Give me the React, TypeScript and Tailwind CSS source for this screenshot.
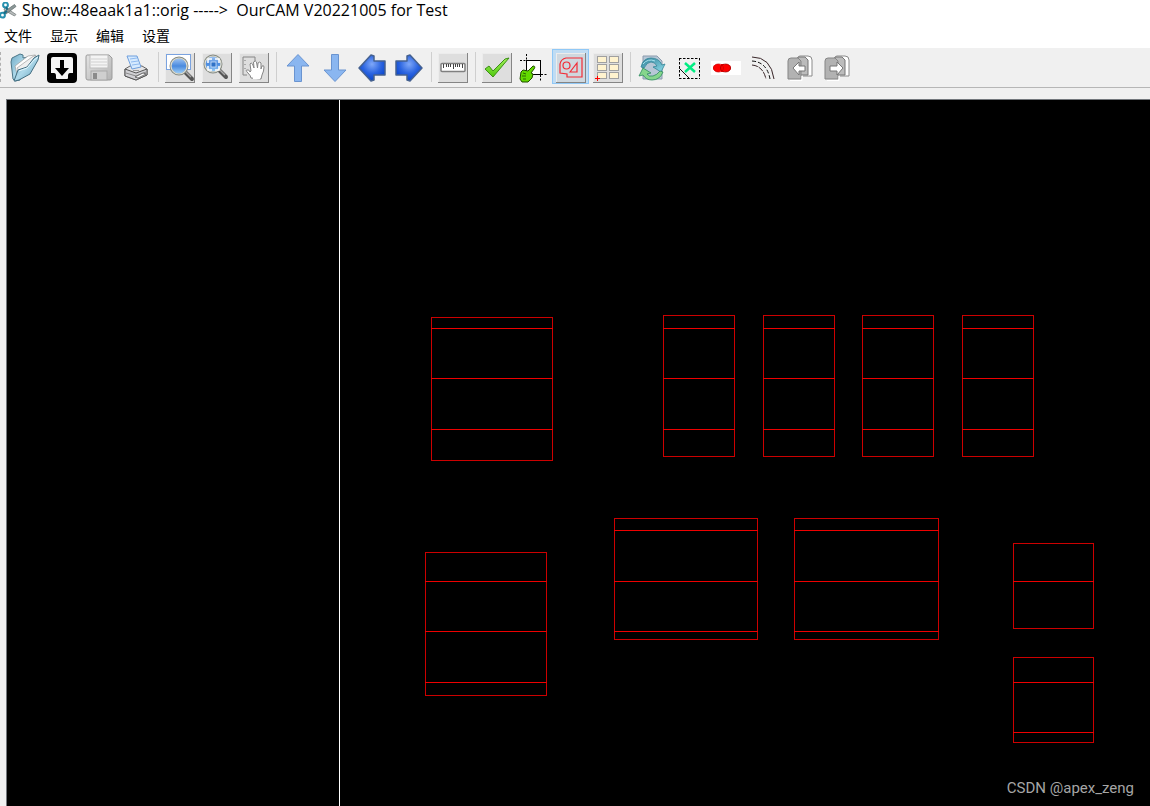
import type { ReactNode } from 'react';
import { clsx } from 'clsx';

interface Tool {
  name: string;
  icon: ReactNode;
  raised?: boolean;
  active?: boolean;
}

interface Shape {
  x: number;
  y: number;
  w: number;
  h: number;
  lines: number[];
}

const menus = ['文件', '显示', '编辑', '设置'];

const shapes: Shape[] = [
  { x: 431, y: 317, w: 121, h: 143, lines: [328, 378, 429] },
  { x: 663, y: 315, w: 71, h: 141, lines: [328, 378, 429] },
  { x: 763, y: 315, w: 71, h: 141, lines: [328, 378, 429] },
  { x: 862, y: 315, w: 71, h: 141, lines: [328, 378, 429] },
  { x: 962, y: 315, w: 71, h: 141, lines: [328, 378, 429] },
  { x: 425, y: 552, w: 121, h: 143, lines: [581, 631, 682] },
  { x: 614, y: 518, w: 143, h: 121, lines: [530, 581, 631] },
  { x: 794, y: 518, w: 144, h: 121, lines: [530, 581, 631] },
  { x: 1013, y: 543, w: 80, h: 85, lines: [581] },
  { x: 1013, y: 657, w: 80, h: 85, lines: [682, 732] },
];

const Svg = ({ children }: { children: ReactNode }) => (
  <svg viewBox="0 0 30 30" className="block h-[30px] w-[30px]" fill="none" aria-hidden="true">
    {children}
  </svg>
);

const Gradients = () => (
  <svg className="absolute h-0 w-0" aria-hidden="true">
    <defs>
      <linearGradient id="folder" x1="0" y1="0" x2="1" y2="1">
        <stop offset="0" stopColor="#6fa9c4" />
        <stop offset="0.5" stopColor="#aed9ea" />
        <stop offset="1" stopColor="#5f9dba" />
      </linearGradient>
      <linearGradient id="lens" x1="0" y1="0" x2="0" y2="1">
        <stop offset="0" stopColor="#a9cbf5" />
        <stop offset="0.5" stopColor="#4a8ade" />
        <stop offset="1" stopColor="#a8d8fb" />
      </linearGradient>
      <radialGradient id="arrow" cx="0.5" cy="0.35" r="0.6">
        <stop offset="0" stopColor="#7fa8f8" />
        <stop offset="0.6" stopColor="#2b64e0" />
        <stop offset="1" stopColor="#0b48cf" />
      </radialGradient>
      <linearGradient id="tick" x1="0" y1="0" x2="0" y2="1">
        <stop offset="0" stopColor="#a2f05a" />
        <stop offset="1" stopColor="#4fc80e" />
      </linearGradient>
      <linearGradient id="swirl" x1="0" y1="0" x2="1" y2="1">
        <stop offset="0" stopColor="#2f8099" />
        <stop offset="1" stopColor="#8fdcea" />
      </linearGradient>
      <linearGradient id="disk" x1="0" y1="0" x2="1" y2="1">
        <stop offset="0" stopColor="#e4e4e4" />
        <stop offset="1" stopColor="#b4b4b4" />
      </linearGradient>
    </defs>
  </svg>
);

const Scissors = () => (
  <svg viewBox="0 0 17 17" className="block h-[17px] w-[17px]" fill="none" aria-hidden="true">
    <path d="M5 5 16 12.5 14.5 14 4 8z" fill="#b8bcbc" stroke="#6b7474" strokeWidth="0.7" />
    <path d="M3 10.5 14.5 2.5 16 4.5 6 12z" fill="#8d9898" stroke="#5c6868" strokeWidth="0.7" />
    <circle cx="5.5" cy="3" r="2.4" stroke="#2790ae" strokeWidth="2" />
    <circle cx="2.5" cy="13.2" r="2.4" stroke="#2790ae" strokeWidth="2" />
    <path d="M6 5.2 7.5 7.6M4 11.4 7 9" stroke="#176d88" strokeWidth="2" />
  </svg>
);

const FolderIcon = () => (
  <Svg>
    <path d="M1 9 2 5l8-4 3 1v3l5-1-8 23-5 1-2-2z" fill="url(#folder)" stroke="#4b7688" />
    <path d="M5 13 18 3l7-1-7 11-11 8z" fill="#fdfdfd" stroke="#9a9a9a" strokeWidth="0.7" />
    <path d="M7 15 22 4l4-2-6 12-10 7z" fill="#efefef" stroke="#a0a0a0" strokeWidth="0.7" />
    <path d="M4 28 8 17l9-3 7-9 5-3-1 5-8 14-11 6-4 1z" fill="url(#folder)" stroke="#426d80" />
    <path d="M9 18 17 15 24 7l4-3" stroke="#e3f6fd" />
  </Svg>
);

const ImportIcon = () => (
  <Svg>
    <rect width="30" height="30" rx="4" fill="#000" />
    <path d="M6 4h18q2 0 2 2v14h-3q-2 0-2 3v2q0 1-1 1H10q-1 0-1-1v-2q0-3-2-3H4V6q0-2 2-2z" fill="#f6f6f6" />
    <path d="M13 7h4v8h5l-7 8-7-8h5z" fill="#000" />
  </Svg>
);

const SaveIcon = () => (
  <Svg>
    <path d="M3 2h22l3 3v20q0 2-2 2H4q-2 0-2-2V4q0-2 1-2z" fill="url(#disk)" stroke="#9b9b9b" />
    <rect x="6" y="2" width="18" height="13" fill="#f4f4f4" stroke="#bdbdbd" />
    <path d="M7 6h16M7 9h16M7 12h16" stroke="#d0d0d0" />
    <rect x="7" y="18" width="16" height="9" fill="#cfcfcf" stroke="#a9a9a9" />
    <rect x="9" y="20" width="4" height="6" fill="#8b8b8b" />
  </Svg>
);

const PrinterIcon = () => (
  <Svg>
    <path d="M4 16 9 13h12l5 3v6l-11 5-11-4z" fill="#e4e4e6" stroke="#666" />
    <path d="M6 3 16 3l4 11-9 2z" fill="#d6eafe" stroke="#6f9fdd" />
    <path d="M9 6l7-1M10 9l7-1M11 12l7-1" stroke="#8fbaf0" />
    <path d="M4 16 15 20 26 16v6l-11 5-11-4z" fill="#d0d0d4" stroke="#555" />
    <path d="M5 20l10 3 10-4" stroke="#8a8a8a" />
    <path d="M14 24 22 20l3 1-8 4z" fill="#fff" stroke="#444" strokeWidth="0.7" />
    <path d="M12 17.5h6" stroke="#999" />
  </Svg>
);

const Lens = ({ cx, cy }: { cx: number; cy: number }) => (
  <>
    <path d={`M${cx + 6} ${cy + 6}l7 7`} stroke="#555" strokeWidth="4" strokeLinecap="round" />
    <path d={`M${cx + 6} ${cy + 5}l6 6`} stroke="#a8a8a8" strokeWidth="1.5" />
    <circle cx={cx} cy={cy} r="8.5" fill="url(#lens)" stroke="#858a83" strokeWidth="2" />
    <circle cx={cx} cy={cy} r="8" stroke="#dedfd6" strokeWidth="1.2" />
  </>
);

const ZoomRectIcon = () => (
  <Svg>
    <rect x="1.5" y="1.5" width="24" height="15" fill="#fff" stroke="#7ba3df" />
    <Lens cx={14} cy={13} />
  </Svg>
);

const ZoomFitIcon = () => (
  <Svg>
    <Lens cx={11} cy={11} />
    <path d="M6 10V6h4M13 6h4v4M17 13v4h-4M10 17H6v-4" stroke="#fff" strokeWidth="1.5" />
    <rect x="9" y="9" width="5" height="5" fill="#2f72c8" stroke="#e8f2ff" strokeWidth="0.7" />
  </Svg>
);

const PanIcon = () => (
  <Svg>
    <path d="M4 4h12v4M8 22H4V4" stroke="#868686" />
    <path d="M6 7v1M6 11v1M6 15v1" stroke="#777" />
    <path
      d="M12 25q0-2-3-5t-1-3q2-1 3 2l1-1-1-7q1-2 2.5 0l1.5 4-.5-6q2-2 3 0l1 6 .5-5q2-2 3 0v6l1-3q2-1 2 1 0 4-2 8l-1 4z"
      fill="#fff"
      stroke="#858585"
    />
    <path d="M14 25h7" stroke="#fff" strokeWidth="2" />
  </Svg>
);

const UpIcon = () => (
  <Svg>
    <path d="M15 1.5 26 13h-7.5v15.5h-7V13H4z" fill="#8ab6f0" stroke="#6a94d0" />
  </Svg>
);

const DownIcon = () => (
  <Svg>
    <path d="M15 28.5 26 17h-7.5V1.5h-7V17H4z" fill="#8ab6f0" stroke="#6a94d0" />
  </Svg>
);

const LeftIcon = () => (
  <Svg>
    <path d="M2 15 14 2l3 1v5h11v14H17v5l-3 1z" fill="url(#arrow)" stroke="#456190" strokeWidth="1.5" strokeLinejoin="round" />
  </Svg>
);

const RightIcon = () => (
  <Svg>
    <path d="M28 15 16 2l-3 1v5H2v14h11v5l3 1z" fill="url(#arrow)" stroke="#456190" strokeWidth="1.5" strokeLinejoin="round" />
  </Svg>
);

const RulerIcon = () => (
  <Svg>
    <rect x="3" y="10.5" width="24" height="8" rx="1" fill="#fff" stroke="#808080" strokeWidth="1.5" />
    <path d="M5.5 11v4M8.5 11v3M10.5 11v3M12.5 11v3M15.5 11v5M17.5 11v3M19.5 11v3M21.5 11v3M24.5 11v4" stroke="#444" />
  </Svg>
);

const CheckIcon = () => (
  <Svg>
    <path d="M3 16 7 13 11 18 23 6l4-1L11 24z" fill="url(#tick)" stroke="#3c8f16" strokeLinejoin="round" />
  </Svg>
);

const PickAreaIcon = () => (
  <Svg>
    <rect x="7.5" y="7.5" width="14" height="14" fill="#fff" stroke="#000" />
    <path d="M7.5 1v7M1 7.5h7M21.5 22v7M22 21.5h7" stroke="#000" strokeDasharray="2 1.5" />
    <path
      d="M2 19 4 17l5 1 5-5q3 0 1 3l-3 4 2 1-1 4-4 4H3L1 26z"
      fill="#62d900"
      stroke="#214d00"
    />
    <path d="M4 20l3 1M3 23h4M4 26h3" stroke="#2d6b00" />
  </Svg>
);

const OutlineIcon = () => (
  <Svg>
    <path d="M10 5h16v19H11v-3l-7-1v-9q1-5 6-6z" stroke="#f32a35" strokeWidth="1.2" />
    <circle cx="10.5" cy="12.5" r="3.5" stroke="#f32a35" strokeWidth="1.2" />
    <path d="M14 19 21 10v9z" stroke="#f32a35" strokeWidth="1.2" />
  </Svg>
);

const ArrayIcon = () => (
  <Svg>
    <g fill="#fff3cf" stroke="#a0a0a0">
      <rect x="4.5" y="3.5" width="9" height="6" />
      <rect x="16.5" y="3.5" width="9" height="6" />
      <rect x="4.5" y="11.5" width="9" height="6" />
      <rect x="16.5" y="11.5" width="9" height="6" />
      <rect x="4.5" y="19.5" width="9" height="6" />
      <rect x="16.5" y="19.5" width="9" height="6" />
    </g>
    <path d="M2 25.5h5M4.5 23v5" stroke="#f00" />
  </Svg>
);

const RefreshIcon = () => (
  <Svg>
    <path d="M6 3h14l5 5v18H6z" fill="#b7c7d6" stroke="#8b9bad" />
    <path d="M4 14Q6 5 14 5t11 7l3-1-4 8-8-5 4-1q-2-4-6-4t-7 6z" fill="url(#swirl)" stroke="#348597" strokeWidth="0.8" />
    <path d="M26 19q-3 8-11 8-6 0-9-5l-4 1 4-8 8 5-4 1q2 3 6 2t7-5z" fill="#86d68c" stroke="#2d8a60" strokeWidth="0.8" />
    <path d="M6 11q5-6 12-3" stroke="#a9e4ee" />
  </Svg>
);

const DeselectIcon = () => (
  <Svg>
    <path d="M5 5.5h21M25.5 5v21M5 25.5h21M5.5 5v21" stroke="#000" strokeDasharray="2.5 1.5" />
    <path d="M5 15 15.5 25.5" stroke="#111" />
    <path d="m11 10 10 9M21 10l-10 9" stroke="#00ed83" strokeWidth="2.5" />
  </Svg>
);

const MergeIcon = () => (
  <Svg>
    <path d="M0 8h30v14H0z" fill="#fff" />
    <ellipse cx="7" cy="15" rx="5" ry="4" fill="#f00" />
    <ellipse cx="15" cy="15" rx="5" ry="4" fill="#f00" />
    <path d="M10 11h3v8h-3z" fill="#f00" />
    <ellipse cx="7.5" cy="15" rx="5" ry="4" stroke="#c60000" strokeWidth="0.7" />
    <ellipse cx="14.5" cy="15" rx="5" ry="4" stroke="#960000" strokeWidth="0.7" />
  </Svg>
);

const ArcIcon = () => (
  <Svg>
    <path d="M4 4q19 0 22 22" stroke="#382528" />
    <path d="M4 8q15 1 18 18" stroke="#111" strokeDasharray="4 2" />
    <path d="M4 12q11 1 14 14" stroke="#382528" strokeDasharray="6 1" />
  </Svg>
);

const Pages = ({ children }: { children: ReactNode }) => (
  <Svg>
    <path d="M13 24V5q0-2 2-2h8q4 0 4 4v16h-9" fill="#fff" stroke="#8a8a8a" />
    <path d="M12 24V6q0-2 2-2h6l3 3v15h-8z" fill="#bcbcbc" stroke="#777" />
    <path d="M3 8q0-3 3-3h7l3 3v18H3z" fill="#b2b2b2" stroke="#858585" />
    <path d="M5 27.5h12V23" stroke="#fff" />
    {children}
  </Svg>
);

const PageLeftIcon = () => (
  <Pages>
    <path d="M8 15 14 9v4h6v5h-6v4z" fill="#fff" stroke="#777" />
  </Pages>
);

const PageRightIcon = () => (
  <Pages>
    <path d="M21 15 15 9v4H8v5h7v4z" fill="#fff" stroke="#777" />
  </Pages>
);

const toolGroups: Tool[][] = [
  [
    { name: 'Open', icon: <FolderIcon /> },
    { name: 'Import', icon: <ImportIcon /> },
    { name: 'Save', icon: <SaveIcon /> },
    { name: 'Print', icon: <PrinterIcon /> },
  ],
  [
    { name: 'Zoom area', icon: <ZoomRectIcon />, raised: true },
    { name: 'Zoom to fit', icon: <ZoomFitIcon />, raised: true },
    { name: 'Pan', icon: <PanIcon />, raised: true },
  ],
  [
    { name: 'Move up', icon: <UpIcon /> },
    { name: 'Move down', icon: <DownIcon /> },
    { name: 'Move left', icon: <LeftIcon /> },
    { name: 'Move right', icon: <RightIcon /> },
  ],
  [{ name: 'Measure', icon: <RulerIcon />, raised: true }],
  [
    { name: 'Apply', icon: <CheckIcon />, raised: true },
    { name: 'Pick area', icon: <PickAreaIcon /> },
    { name: 'Outline', icon: <OutlineIcon />, raised: true, active: true },
    { name: 'Array', icon: <ArrayIcon />, raised: true },
  ],
  [
    { name: 'Refresh', icon: <RefreshIcon /> },
    { name: 'Deselect', icon: <DeselectIcon /> },
    { name: 'Merge', icon: <MergeIcon /> },
    { name: 'Arc', icon: <ArcIcon /> },
    { name: 'Previous page', icon: <PageLeftIcon /> },
    { name: 'Next page', icon: <PageRightIcon /> },
  ],
];

const ToolButton = ({ name, icon, raised, active }: Tool) => (
  <button
    type="button"
    aria-label={name}
    aria-pressed={active}
    className={clsx(
      'h-[35px] w-[37px] shrink-0 border pt-[2px] pl-[3px]',
      active ? 'border-[#90c8f6] bg-[#c0dcf3]' : 'border-transparent',
    )}
  >
    <span
      className={clsx(
        'block h-[30px] w-[30px]',
        raised && 'shadow-[inset_-1px_-1px_0_#858585,inset_1px_1px_0_#ececec]',
        raised && (active ? 'bg-[#cfd8df]' : 'bg-[#dedede]'),
      )}
    >
      {icon}
    </span>
  </button>
);

const Toolbar = () => (
  <div role="toolbar" className="flex h-10 shrink-0 items-center border-b border-[#b6b6b6] bg-[#f0f0f0] pb-[2px]">
    <div className="mr-[5px] h-[30px] border-l border-dashed border-[#b0b0b0]" />
    {toolGroups.map((group, i) => (
      <div key={i} className="flex shrink-0 items-center">
        {i > 0 && <div className="mr-[2px] ml-1 h-[30px] w-px bg-[#cfcfcf]" />}
        {group.map((tool) => (
          <ToolButton key={tool.name} {...tool} />
        ))}
      </div>
    ))}
  </div>
);

const Viewport = () => (
  <main className="relative min-h-0 flex-1 overflow-hidden border-t border-l border-[#73777c] bg-black">
    {/* board coordinates start at the frame's inner corner */}
    <svg className="block h-full w-full" fill="none" shapeRendering="crispEdges" aria-label="Board outline">
      <g transform="translate(-7 -100)">
        <path d="M339.5 100v2000" stroke="#fff" />
        {shapes.map(({ x, y, w, h, lines }) => (
          <g key={`${x}-${y}`}>
            <rect x={x + 0.5} y={y + 0.5} width={w} height={h} stroke="#cc0000" />
            {lines.map((line) => (
              <path key={line} d={`M${x} ${line + 0.5}h${w + 1}`} stroke="#ee0000" />
            ))}
          </g>
        ))}
      </g>
    </svg>
    <p className="absolute right-4 bottom-2 font-[Roboto,sans-serif] text-[15px] leading-5 text-[#a6a6a6]">
      CSDN @apex_zeng
    </p>
  </main>
);

export default function App() {
  return (
    <div className="flex h-screen flex-col bg-[#f0f0f0] text-black">
      <Gradients />
      <header className="flex h-6 shrink-0 items-center bg-white pb-1 font-['Open_Sans',sans-serif] text-base leading-5">
        <Scissors />
        <h1 className="ml-[5px] whitespace-pre">{'Show::48eaak1a1::orig ----->  OurCAM V20221005 for Test'}</h1>
      </header>
      <nav className="flex h-6 shrink-0 items-center gap-[18px] bg-white pb-[2px] pl-1 font-['Noto_Sans_CJK_SC',sans-serif] text-sm">
        {menus.map((menu) => (
          <button key={menu} type="button">
            {menu}
          </button>
        ))}
      </nav>
      <Toolbar />
      <div className="flex min-h-0 flex-1 flex-col pt-[11px] pl-[6px]">
        <Viewport />
      </div>
    </div>
  );
}
